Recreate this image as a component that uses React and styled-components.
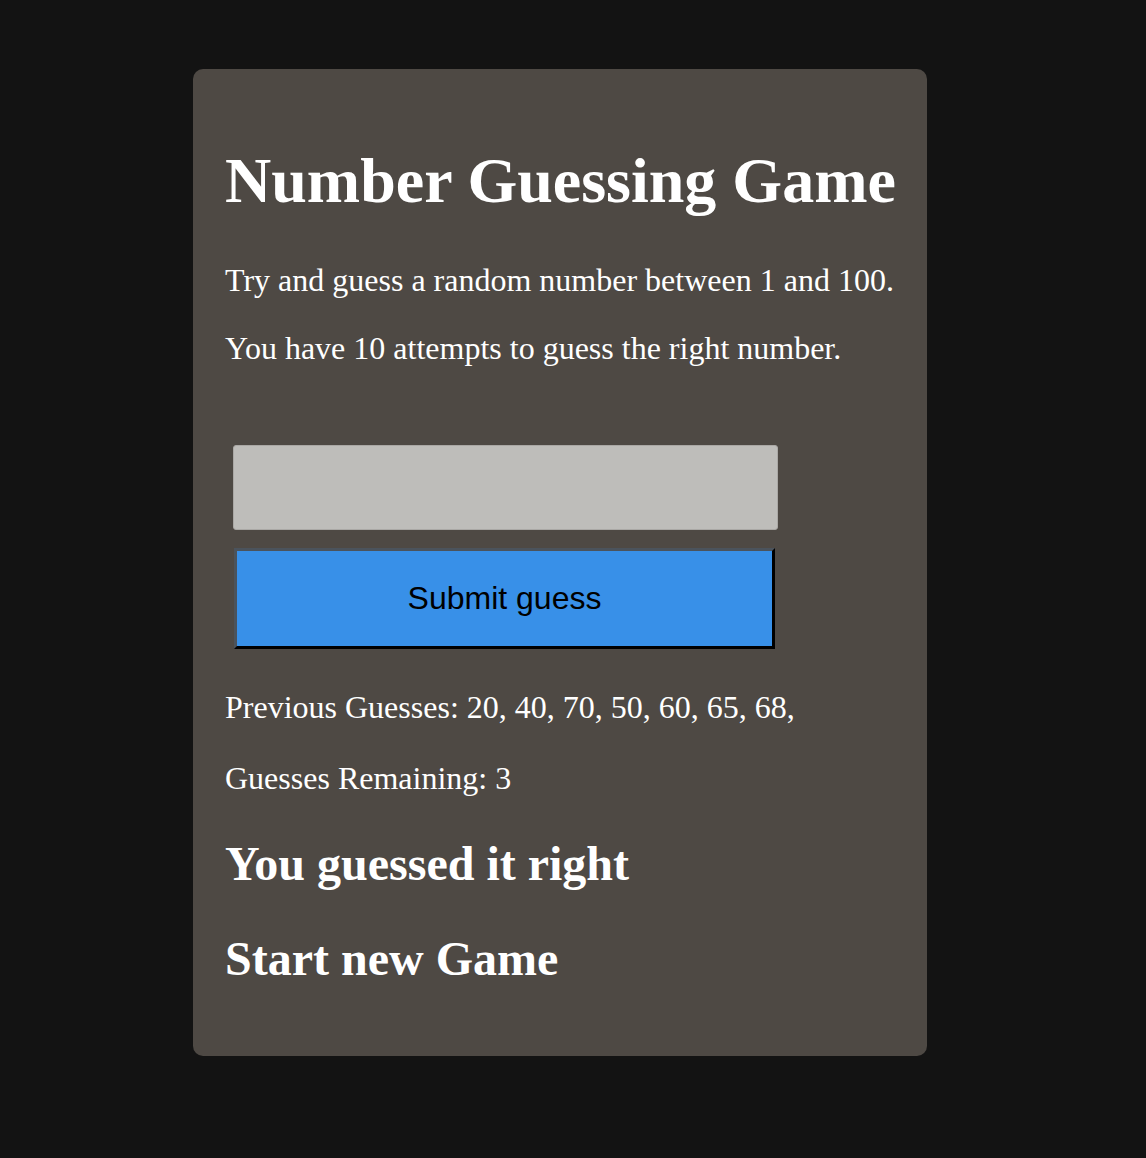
import React from "react";
import styled, { createGlobalStyle } from "styled-components";

const Global = createGlobalStyle`
  html, body { margin: 0; padding: 0; background: #131313; }
  body { font-family: "Liberation Serif", "Times New Roman", serif; color: #fff; }
`;

const Page = styled.div`
  min-height: 1158px;
  padding-top: 69px;
  padding-left: 193px;
  box-sizing: border-box;
`;

const Card = styled.main`
  width: 734px;
  box-sizing: border-box;
  background: #4e4944;
  border-radius: 10px;
  padding: 32px 32px 69px;
  display: flow-root;
`;

const Title = styled.h1`
  font-size: 64px;
  font-weight: 700;
  margin: 43px 0 44px;
  line-height: 1.15;
  white-space: nowrap;
`;

const Text = styled.p`
  font-size: 32px;
  margin: 0 0 ${(p) => p.$gap || 32}px;
  line-height: 1.15;
`;

const Form = styled.form`
  display: flex;
  flex-direction: column;
  align-items: flex-start;
  padding-left: 8px;
  margin: 78px 0 40px;
`;

const Field = styled.input`
  width: 545px;
  height: 85px;
  box-sizing: border-box;
  background: #bebdba;
  border: 1px solid #aaa8a5;
  border-radius: 3px;
  margin: 0 0 18px;
`;

const Submit = styled.button`
  width: 541px;
  height: 101px;
  margin-left: 1px;
  box-sizing: border-box;
  background: #3890e8;
  border-style: solid;
  border-width: 3px;
  border-color: #4b535c #000 #000 #4b535c;
  font-family: "Liberation Sans", Arial, sans-serif;
  font-size: 32px;
  color: #000;
`;

const Result = styled.h2`
  font-size: 48px;
  font-weight: 700;
  margin: 0 0 ${(p) => p.$gap || 40}px;
  line-height: 1.15;
`;

export default function App() {
  return (
    <>
      <Global />
      <Page>
        <Card>
          <Title>Number Guessing Game</Title>
          <Text>Try and guess a random number between 1 and 100.</Text>
          <Text $gap={1}>You have 10 attempts to guess the right number.</Text>
          <Form onSubmit={(e) => e.preventDefault()}>
            <Field type="text" />
            <Submit type="submit">Submit guess</Submit>
          </Form>
          <Text $gap={34}>Previous Guesses: 20, 40, 70, 50, 60, 65, 68,</Text>
          <Text $gap={39}>Guesses Remaining: 3</Text>
          <Result $gap={40}>You guessed it right</Result>
          <Result $gap={1}>Start new Game</Result>
        </Card>
      </Page>
    </>
  );
}
